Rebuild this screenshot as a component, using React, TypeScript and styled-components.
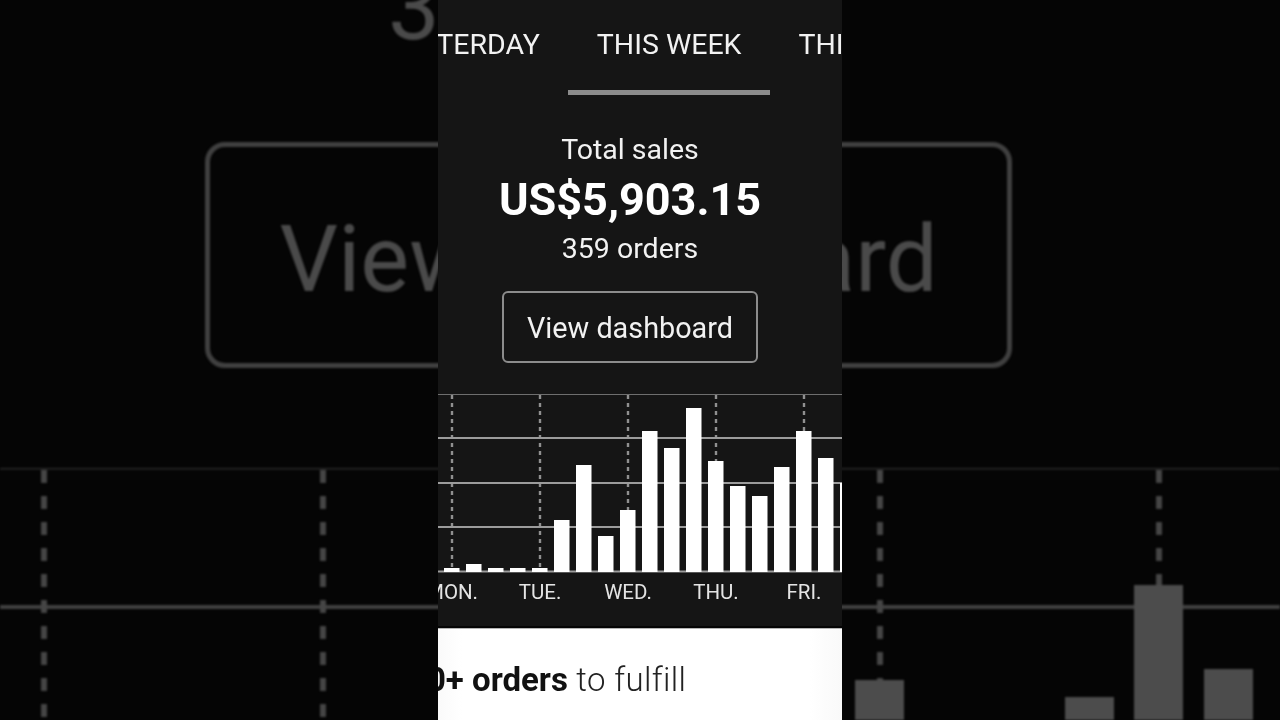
import React from 'react'
import styled, { createGlobalStyle } from 'styled-components'

const GlobalStyle = createGlobalStyle`
  html, body {
    margin: 0;
    padding: 0;
    background: #050505;
    font-family: Roboto, "Liberation Sans", sans-serif;
  }
`

const Page = styled.div`
  position: relative;
  display: flex;
  justify-content: center;
  width: 1280px;
  height: 720px;
  overflow: hidden;
  background: #050505;
`

/* blurred, zoomed copy of the screen behind the phone video */
const Backdrop = styled.div`
  position: absolute;
  inset: 0;
  display: flex;
  flex-direction: column;
  color: #4a4a4a;
  filter: blur(0.8px);
`

const GhostCount = styled.div`
  width: 1216px;
  height: 91px;
  margin-top: -38px;
  font-size: 92px;
  line-height: 91px;
  text-align: center;
`

const GhostButton = styled.div`
  box-sizing: border-box;
  display: flex;
  align-items: center;
  justify-content: center;
  width: 807px;
  height: 226px;
  margin: 89px 0 0 205px;
  padding-top: 8px;
  border: 5px solid #404040;
  border-radius: 20px;
  font-size: 92px;
`

const GhostChart = styled.svg`
  display: block;
  margin-top: 100px;
  flex: none;
`

const Phone = styled.div`
  position: relative;
  display: flex;
  flex-direction: column;
  width: 404px;
  height: 720px;
  overflow: hidden;
  background: #151515;
  color: #f2f2f2;
  filter: blur(0.3px);
`

const Tabs = styled.div`
  display: flex;
  flex: none;
  height: 95px;
  margin-left: -80.5px;
`

const Tab = styled.div<{ $active?: boolean }>`
  box-sizing: border-box;
  flex: none;
  padding: 27px 28.5px 0;
  font-size: 28.5px;
  line-height: 36px;
  white-space: nowrap;
  border-bottom: 5px solid ${({ $active }) => ($active ? '#8c8c8c' : 'transparent')};
`

const Summary = styled.div`
  display: flex;
  flex-direction: column;
  align-items: center;
  flex: none;
  width: 384px;
`

const SummaryLabel = styled.div`
  margin-top: 38px;
  font-size: 28.5px;
  line-height: 34px;
`

const SummaryValue = styled.div`
  margin-top: 7px;
  font-size: 45px;
  font-weight: 700;
  line-height: 52px;
  color: #fff;
`

const SummaryCount = styled.div`
  margin-top: 6px;
  font-size: 28.5px;
  line-height: 34px;
`

const DashboardButton = styled.button`
  box-sizing: border-box;
  width: 256px;
  height: 72px;
  margin-top: 25px;
  padding: 2px 0 0;
  border: 2px solid #8c8c8c;
  border-radius: 6px;
  background: transparent;
  color: #f2f2f2;
  font-family: inherit;
  font-size: 28.8px;
`

const ChartSvg = styled.svg`
  display: block;
  flex: none;
  margin-top: 30px;
`

const Labels = styled.div`
  display: flex;
  flex: none;
  height: 42px;
  margin-left: -30px;
  color: #e4e4e4;
  font-size: 20.5px;
  line-height: 38px;
`

const Label = styled.div`
  flex: none;
  width: 88px;
  text-align: center;
`

const Card = styled.div`
  flex: 1;
  margin-top: 11px;
  padding-top: 33px;
  border-top: 2px solid #050505;
  box-shadow: inset 0 1px 0 #b5b5b5;
  background: linear-gradient(90deg, #fafafa 0, #fff 6%, #fff 92%, #f9f9f9 100%);
  color: #222;
  font-size: 33px;
  font-weight: 300;
  letter-spacing: 0.35px;
  line-height: 38px;
  white-space: nowrap;
`

const CardText = styled.div`
  margin-left: -30px;

  b {
    color: #111;
    font-weight: 700;
    letter-spacing: 0;
  }
`

const tops = [568, 564, 568, 568, 568, 520, 465, 536, 510, 431, 448, 408, 461, 486, 496, 467, 431, 458, 483]
const grid = [438, 483, 527]
const ticks = [452, 540, 628, 716, 804]
const days = ['MON.', 'TUE.', 'WED.', 'THU.', 'FRI.']

const BarChart: React.FC = () => (
  <ChartSvg width={404} height={180} viewBox="438 393 404 180">
    <line x1={438} x2={842} y1={394.5} y2={394.5} stroke="#6e6e6e" strokeWidth={1} />
    {ticks.map((x) => (
      <line key={x} x1={x} x2={x} y1={395} y2={571} stroke="#909090" strokeWidth={2.4} strokeDasharray="4 4" />
    ))}
    {grid.map((y) => (
      <line key={y} x1={438} x2={842} y1={y} y2={y} stroke="#9c9c9c" strokeWidth={2} />
    ))}
    <line x1={438} x2={842} y1={571.5} y2={571.5} stroke="#9c9c9c" strokeWidth={2} />
    {tops.map((top, i) => (
      <rect key={i} x={444 + i * 22} y={top} width={15.5} height={572 - top} fill="#fff" />
    ))}
  </ChartSvg>
)

const ghostBars = [
  { x: 855, top: 680 },
  { x: 1065, top: 697 },
  { x: 1134, top: 585 },
  { x: 1204, top: 669 },
]

const BackdropChart: React.FC = () => (
  <GhostChart width={1280} height={252} viewBox="0 468 1280 252">
    <line x1={0} x2={1280} y1={468.5} y2={468.5} stroke="#2c2c2c" strokeWidth={2} />
    <line x1={0} x2={1280} y1={607} y2={607} stroke="#404040" strokeWidth={4} />
    <g stroke="#454545" strokeWidth={6} strokeDasharray="13 13">
      <line x1={44} x2={44} y1={470} y2={720} />
      <line x1={323} x2={323} y1={470} y2={720} />
      <line x1={880} x2={880} y1={470} y2={680} />
      <line x1={1159} x2={1159} y1={470} y2={585} />
    </g>
    {ghostBars.map((bar) => (
      <rect key={bar.x} x={bar.x} y={bar.top} width={49} height={720 - bar.top} fill="#4c4c4c" />
    ))}
  </GhostChart>
)

const App: React.FC = () => (
  <Page>
    <GlobalStyle />
    <Backdrop>
      <GhostCount>359 orders</GhostCount>
      <GhostButton>View dashboard</GhostButton>
      <BackdropChart />
    </Backdrop>
    <Phone>
      <Tabs>
        <Tab>YESTERDAY</Tab>
        <Tab $active>THIS WEEK</Tab>
        <Tab>THIS MONTH</Tab>
      </Tabs>
      <Summary>
        <SummaryLabel>Total sales</SummaryLabel>
        <SummaryValue>US$5,903.15</SummaryValue>
        <SummaryCount>359 orders</SummaryCount>
        <DashboardButton>View dashboard</DashboardButton>
      </Summary>
      <BarChart />
      <Labels>
        {days.map((day) => (
          <Label key={day}>{day}</Label>
        ))}
      </Labels>
      <Card>
        <CardText>
          <b>10+ orders</b> to fulfill
        </CardText>
      </Card>
    </Phone>
  </Page>
)

export default App
